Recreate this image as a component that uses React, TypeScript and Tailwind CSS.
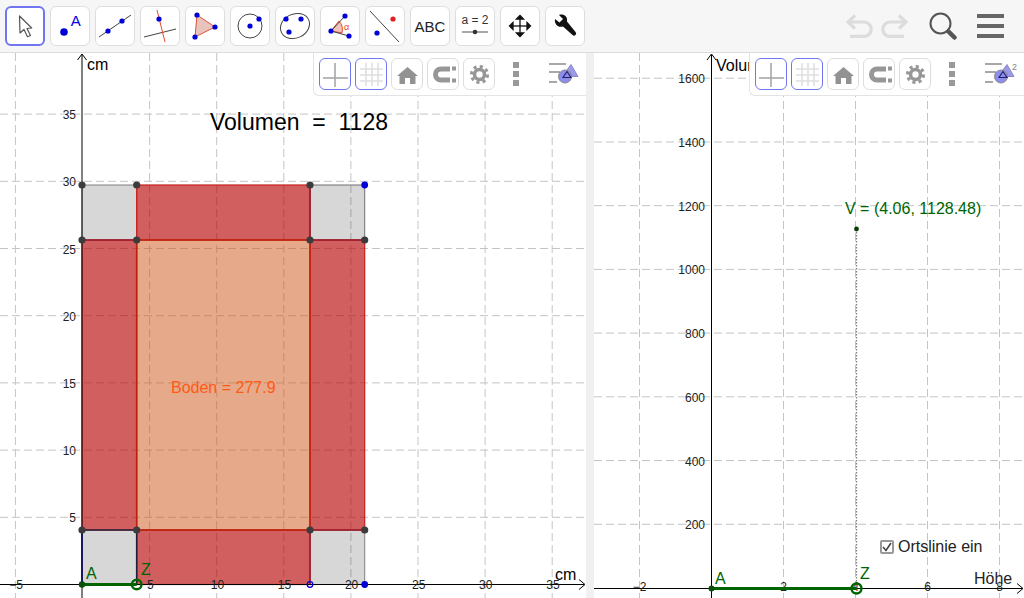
import type { ReactNode } from "react";

const BLUE = "#0000d8";
const DARK = "#3c3c3c";
const GREEN = "#006400";

function Dot({ x, y, r = 2.6, fill = BLUE }: { x: number; y: number; r?: number; fill?: string }) {
  return <circle cx={x} cy={y} r={r} fill={fill} />;
}

// toolbar icons, each drawn on a 40x40 box
const toolIcons: ReactNode[] = [
  <path key="move" d="M14.5 10 L15 27 L19 23.5 L22.5 30.7 L25.5 29.5 L22 22.5 L26.7 22 Z" fill="#fff" stroke="#555" strokeWidth="1.2" strokeLinejoin="round" />,
  <g key="point">
    <Dot x={14} y={26} r={3.8} />
    <text x={20.7} y={20} className="font-['Liberation_Sans'] text-[15px]" fill="#0000e0">A</text>
  </g>,
  <g key="line">
    <line x1={4} y1={31} x2={36} y2={9} stroke="#444" strokeWidth="1" />
    <Dot x={13} y={25} />
    <Dot x={27} y={15} />
  </g>,
  <g key="perp">
    <line x1={4} y1={31} x2={36} y2={23} stroke="#444" strokeWidth="1" />
    <line x1={17} y1={4} x2={25} y2={36} stroke="#e8492a" strokeWidth="1" />
    <Dot x={19} y={13} />
  </g>,
  <g key="polygon">
    <path d="M12 9 L30 21 L10 31 Z" fill="#e9c4bd" stroke="#d9533c" strokeWidth="1" />
    <Dot x={12} y={9} />
    <Dot x={30} y={21} />
    <Dot x={10} y={31} />
  </g>,
  <g key="circle">
    <circle cx={20} cy={20} r={12} fill="none" stroke="#444" strokeWidth="1" />
    <Dot x={20} y={20} />
    <Dot x={29} y={13} />
  </g>,
  <g key="ellipse">
    <ellipse cx={20} cy={20} rx={15} ry={12} transform="rotate(-25 20 20)" fill="none" stroke="#444" strokeWidth="1" />
    <Dot x={11} y={13} />
    <Dot x={26} y={13} />
    <Dot x={14} y={26} />
  </g>,
  <g key="angle">
    <path d="M11 25 L19 15 A13 13 0 0 1 22 27 Z" fill="#efc4ba" stroke="#e8492a" strokeWidth="1" />
    <path d="M11 25 L25 10 M11 25 L29 30" fill="none" stroke="#444" strokeWidth="1" />
    <text x={24} y={24} className="font-['Liberation_Sans'] text-[9px]" fill="#e8492a">α</text>
    <Dot x={11} y={25} />
    <Dot x={25} y={10} />
    <Dot x={29} y={30} />
  </g>,
  <g key="reflect">
    <line x1={5} y1={5} x2={34} y2={36} stroke="#444" strokeWidth="1" />
    <Dot x={28} y={13} fill="#e02020" />
    <Dot x={12} y={27} />
  </g>,
  <text key="abc" x={20} y={26} textAnchor="middle" className="font-['Liberation_Sans'] text-[15px]" fill="#222">ABC</text>,
  <g key="slider">
    <text x={20} y={17.5} textAnchor="middle" className="font-['Liberation_Sans'] text-[12px]" fill="#333">a = 2</text>
    <line x1={7} y1={26} x2={33} y2={26} stroke="#555" strokeWidth="1" />
    <circle cx={20} cy={26} r={2.3} fill="#333" />
  </g>,
  <g key="movegraphics" stroke="#111" strokeWidth="1.3" fill="#111">
    <line x1={20} y1={11} x2={20} y2={29} />
    <line x1={11} y1={20} x2={29} y2={20} />
    <path d="M16.5 13 L20 9.5 L23.5 13 Z" />
    <path d="M16.5 27 L20 30.5 L23.5 27 Z" />
    <path d="M13 16.5 L9.5 20 L13 23.5 Z" />
    <path d="M27 16.5 L30.5 20 L27 23.5 Z" />
  </g>,
  <path key="wrench" d="M10 13 L14.5 16.5 L18 13 L14 9 C18 7.5 23 10 22 15.5 L30.5 26 A2 2 0 0 1 27.5 29 L18 20.5 C13 22 9 18 10 13 Z" fill="#111" />,
];

function ToolButton({ icon, active }: { icon: ReactNode; active?: boolean }) {
  return (
    <div
      className={
        active
          ? "size-10 rounded-md border-2 border-[#6f76f0] bg-white"
          : "size-10 rounded-md border border-[#dedede] bg-white"
      }
    >
      <svg viewBox={active ? "2 2 36 36" : "1 1 38 38"} className={active ? "size-9" : "size-[38px]"}>
        {icon}
      </svg>
    </div>
  );
}

function Toolbar() {
  return (
    <div className="flex h-[53px] shrink-0 items-center justify-between border-b border-[#dcdcdc] bg-[#f6f6f6] pl-[5px] pr-[20px]">
      <div className="flex gap-[5px]">
        {toolIcons.map((icon, i) => (
          <ToolButton key={i} icon={icon} active={i === 0} />
        ))}
      </div>
      <div className="flex items-center gap-[20px]">
        <svg viewBox="0 0 64 24" className="h-[24px] w-[64px]" fill="none" stroke="#dcdcdc" strokeWidth="3.2">
          <path d="M3 8 H19 A7 7 0 0 1 19 22.4 H5" />
          <path d="M10 1.5 L3 8 L10 14.5" />
          <path d="M61 8 H45 A7 7 0 0 0 45 22.4 H59" />
          <path d="M54 1.5 L61 8 L54 14.5" />
        </svg>
        <svg viewBox="0 0 28 28" className="size-[28px]" fill="none">
          <circle cx={11.5} cy={11.5} r={10} stroke="#555" strokeWidth="2" />
          <line x1={19.5} y1={19.5} x2={25.5} y2={25.5} stroke="#555" strokeWidth="4.5" strokeLinecap="round" />
        </svg>
        <div className="flex w-[27px] flex-col gap-[6.5px]">
          <div className="h-[3.5px] bg-[#666]" />
          <div className="h-[3.5px] bg-[#666]" />
          <div className="h-[3.5px] bg-[#666]" />
        </div>
      </div>
    </div>
  );
}

const styleIcons: ReactNode[] = [
  <g key="axes" stroke="#a8a8a8" strokeWidth="1.6">
    <line x1={15} y1={4} x2={15} y2={28} />
    <line x1={3} y1={19} x2={28} y2={19} />
  </g>,
  <g key="grid" stroke="#e0e0e0" strokeWidth="1.6">
    <line x1={10} y1={4} x2={10} y2={27} />
    <line x1={16} y1={4} x2={16} y2={27} />
    <line x1={22} y1={4} x2={22} y2={27} />
    <line x1={4} y1={10} x2={27} y2={10} />
    <line x1={4} y1={16} x2={27} y2={16} />
    <line x1={4} y1={22} x2={27} y2={22} />
  </g>,
  <path key="home" d="M15.5 8 L26 17 H23.5 V25 H18 V19 H13 V25 H7.5 V17 H5 Z" fill="#929292" />,
  <g key="magnet" fill="none" stroke="#979797">
    <path d="M22 10 H13 A5.5 5.5 0 0 0 13 21 H22" strokeWidth="5" />
    <path d="M24 9.5 H28 M24 21.5 H28" strokeWidth="4" />
  </g>,
  <g key="gear" fill="none" stroke="#979797">
    <circle cx={15.5} cy={15.5} r={5} strokeWidth="3.6" />
    <circle cx={15.5} cy={15.5} r={8} strokeWidth="3.2" strokeDasharray="3.1 3.18" />
  </g>,
];

function StyleBar({ left, sup }: { left: string; sup?: boolean }) {
  return (
    <div className={left}>
      {styleIcons.map((icon, i) => (
        <div
          key={i}
          className={
            i < 2
              ? "size-[32px] rounded-md border border-[#6f76f0] bg-white"
              : "size-[32px] rounded-md border border-[#dedede] bg-white"
          }
        >
          <svg viewBox="0 0 30 30" className="size-[30px]">
            {icon}
          </svg>
        </div>
      ))}
      <div className="ml-[14px] mr-[25px] flex w-[6px] flex-col gap-[3px]">
        <div className="h-[6px] bg-[#999]" />
        <div className="h-[6px] bg-[#999]" />
        <div className="h-[6px] bg-[#999]" />
      </div>
      <svg viewBox="0 0 34 26" className="h-[26px] w-[34px] shrink-0">
        <g stroke="#999" strokeWidth="1.7">
          <line x1={1} y1={3} x2={18} y2={3} />
          <line x1={1} y1={11} x2={12} y2={11} />
          <line x1={1} y1={21} x2={9} y2={21} />
        </g>
        <path d="M23 3.5 L30 15.5 H14 Z" fill="#9a9ae6" stroke="#8a8ac8" strokeWidth="1" />
        <circle cx={17} cy={15.5} r={6.5} fill="#8d8df0" stroke="#888" strokeWidth="1" />
        <path d="M19 10.5 L23 16.5 H15 Z" fill="none" stroke="#222060" strokeWidth="1.1" />
        {sup && (
          <text x={28} y={9} className="font-['Liberation_Sans'] text-[9px]" fill="#888">2</text>
        )}
      </svg>
    </div>
  );
}

function Grid({ xs, ys, w, h }: { xs: number[]; ys: number[]; w: number; h: number }) {
  return (
    <g stroke="#c4c4c4" strokeWidth="1" strokeDasharray="8 4">
      {xs.map((x) => (
        <line key={x} x1={x} y1={0} x2={x} y2={h} />
      ))}
      {ys.map((y) => (
        <line key={y} x1={0} y1={y} x2={w} y2={y} />
      ))}
    </g>
  );
}

const leftXs = [-5, 5, 10, 15, 20, 25, 30, 35];
const leftYs = [5, 10, 15, 20, 25, 30, 35];
const lx = (v: number) => 82.5 + v * 13.42;
const ly = (v: number) => 531.5 - v * 13.44; // svg starts under the toolbar

const X0 = 82;
const X1 = 136.7;
const X2 = 310;
const X3 = 364.7;
const Y0 = 132; // top, 185 on the page
const Y1 = 187;
const Y2 = 477;
const Y3 = 531.5;

function LeftPlot() {
  const red = "rgba(182,0,0,0.627)";
  const grey = "rgba(0,0,0,0.155)";
  return (
    <svg width={586} height={545} className="block font-['Liberation_Sans']">
      <Grid xs={leftXs.map(lx)} ys={leftYs.map(ly)} w={586} h={545} />
      <rect x={X0} y={Y0} width={X1 - X0} height={Y1 - Y0} fill={grey} stroke="#808080" />
      <rect x={X2} y={Y0} width={X3 - X2} height={Y1 - Y0} fill={grey} stroke="#707070" />
      <rect x={X0} y={Y2} width={X1 - X0} height={Y3 - Y2} fill={grey} />
      <rect x={X2} y={Y2} width={X3 - X2} height={Y3 - Y2} fill={grey} stroke="#808080" />
      <rect x={X1} y={Y0} width={X2 - X1} height={Y1 - Y0} fill={red} stroke="#c8201a" strokeWidth="1.2" />
      <rect x={X0} y={Y1} width={X1 - X0} height={Y2 - Y1} fill={red} stroke="#c8201a" strokeWidth="1.2" />
      <rect x={X2} y={Y1} width={X3 - X2} height={Y2 - Y1} fill={red} stroke="#c8201a" strokeWidth="1.2" />
      <rect x={X1} y={Y2} width={X2 - X1} height={Y3 - Y2} fill={red} stroke="#c8201a" strokeWidth="1.2" />
      <rect x={X1} y={Y1} width={X2 - X1} height={Y2 - Y1} fill="rgba(205,83,21,0.5)" stroke="#c02010" strokeWidth="1.6" />
      <line x1={X0} y1={Y1} x2={X1} y2={Y1} stroke="#982035" strokeWidth="1.6" />
      <line x1={X2} y1={Y1} x2={X3} y2={Y1} stroke="#982035" strokeWidth="1.6" />
      <line x1={X2} y1={Y0} x2={X2} y2={Y1} stroke="#982035" strokeWidth="1.6" />
      <line x1={X2} y1={Y2} x2={X2} y2={Y3} stroke="#982035" strokeWidth="1.6" />
      <line x1={X2} y1={Y2} x2={X3} y2={Y2} stroke="#982035" strokeWidth="1.6" />
      <line x1={X0} y1={Y2} x2={X1} y2={Y2} stroke="#20203c" strokeWidth="1.6" />
      <line x1={X1} y1={Y2} x2={X1} y2={Y3} stroke="#20203c" strokeWidth="1.6" />
      <line x1={X0} y1={Y2} x2={X0} y2={Y3} stroke="#0000c0" strokeWidth="1.6" />

      <line x1={0} y1={Y3} x2={584} y2={Y3} stroke="#000" strokeWidth="1" />
      <line x1={X0} y1={2} x2={X0} y2={545} stroke="#000" strokeWidth="1" />
      <path d="M579 526.5 L585 531.5 L579 536.5" fill="none" stroke="#000" />
      <path d="M77.5 7 L82 1 L86.5 7" fill="none" stroke="#000" />
      {leftXs.map((v) => (
        <text key={v} x={lx(v) + 0.7} y={536} textAnchor="middle" className="text-[12px]" fill="#222">
          {v < 0 ? "\u2212" + -v : v}
        </text>
      ))}
      {leftYs.map((v) => (
        <text key={v} x={76} y={ly(v) + 5} textAnchor="end" className="text-[12px]" fill="#222">
          {v}
        </text>
      ))}
      <text x={87} y={17} className="text-[16px]" fill="#000">cm</text>
      <text x={555} y={527} className="text-[16px]" fill="#000">cm</text>
      <text x={210} y={77} className="text-[23px]" fill="#000" xmlSpace="preserve">Volumen  =  1128</text>
      <text x={171} y={340} className="text-[16px]" fill="#ff5a14">Boden = 277.9</text>

      {[X0, X1, X2].map((x) => (
        <Dot key={x} x={x} y={Y0} r={3.6} fill={DARK} />
      ))}
      <Dot x={X3} y={Y0} r={3.4} />
      {[X0, X1, X2, X3].map((x) => (
        <Dot key={x} x={x} y={Y1} r={3.6} fill={DARK} />
      ))}
      {[X0, X1, X2, X3].map((x) => (
        <Dot key={x} x={x} y={Y2} r={3.6} fill={DARK} />
      ))}
      <circle cx={X2} cy={Y3} r={2.8} fill="none" stroke="#0000d8" strokeWidth="1.3" />
      <Dot x={X3} y={Y3} r={3.4} />
      <line x1={X0} y1={Y3} x2={X1} y2={Y3} stroke={GREEN} strokeWidth="2.8" />
      <Dot x={X0} y={Y3} r={3.2} fill="#0a500a" />
      <circle cx={X1} cy={Y3} r={4.8} fill="none" stroke={GREEN} strokeWidth="2.4" />
      <text x={86} y={526} className="text-[16px]" fill={GREEN}>A</text>
      <text x={141} y={522} className="text-[16px]" fill={GREEN}>Z</text>
    </svg>
  );
}

const OX = 117.5; // y axis inside the right panel
const rightXs = [-2, 2, 4, 6, 8];
const rightYs = [200, 400, 600, 800, 1000, 1200, 1400, 1600];
const rx = (v: number) => OX + v * 36;
const ry = (v: number) => 535 - v * 0.3186;

function RightPlot() {
  return (
    <svg width={430} height={545} className="block font-['Liberation_Sans']">
      <Grid xs={rightXs.map(rx)} ys={rightYs.map(ry)} w={430} h={545} />
      <line x1={0} y1={535.5} x2={428} y2={535.5} stroke="#000" strokeWidth="1" />
      <line x1={OX} y1={2} x2={OX} y2={545} stroke="#000" strokeWidth="1" />
      <path d="M423 530.5 L429 535.5 L423 540.5" fill="none" stroke="#000" />
      <path d="M113 7 L117.5 1 L122 7" fill="none" stroke="#000" />
      {rightXs.map((v) => (
        <text key={v} x={rx(v)} y={538} textAnchor="middle" className="text-[12px]" fill="#222">
          {v < 0 ? "\u2212" + -v : v}
        </text>
      ))}
      {rightYs.map((v) => (
        <text key={v} x={111} y={ry(v) + 5} textAnchor="end" className="text-[12px]" fill="#222">
          {v}
        </text>
      ))}
      <text x={122} y={18} className="text-[16px]" fill="#000">Volumen</text>
      <text x={380} y={531} className="text-[16px]" fill="#222">Höhe</text>

      <line x1={262.5} y1={176} x2={262.5} y2={535} stroke="#808080" strokeWidth="1.3" strokeDasharray="1.5 1.5" />
      <Dot x={262.5} y={176} r={2.4} fill="#0a3c0a" />
      <text x={251} y={161} className="text-[16px]" fill={GREEN}>V = (4.06, 1128.48)</text>

      <line x1={OX} y1={535.5} x2={262.5} y2={535.5} stroke={GREEN} strokeWidth="3.2" />
      <Dot x={OX} y={535.5} r={3} fill="#0a500a" />
      <circle cx={262.5} cy={535.5} r={5} fill="none" stroke={GREEN} strokeWidth="2.4" />
      <text x={121} y={531} className="text-[16px]" fill={GREEN}>A</text>
      <text x={266} y={526} className="text-[16px]" fill={GREEN}>Z</text>
    </svg>
  );
}

export default function App() {
  return (
    <div className="flex h-[598px] w-[1024px] flex-col overflow-hidden bg-white font-['Liberation_Sans',sans-serif]">
      <Toolbar />
      <div className="flex min-h-0 flex-1">
        <div className="relative w-[586px] shrink-0 overflow-hidden">
          <LeftPlot />
          <StyleBar left="absolute right-0 top-0 flex h-[43px] w-[273px] items-center gap-[4px] rounded-bl-md border-b border-l border-[#e4e4e4] bg-white pl-[5px]" />
        </div>
        <div className="w-[8px] shrink-0 bg-[#f0f0f0]" />
        <div className="relative flex-1 overflow-hidden">
          <RightPlot />
          <StyleBar sup left="absolute right-0 top-0 flex h-[43px] w-[275px] items-center gap-[4px] rounded-bl-md border-b border-l border-[#e4e4e4] bg-white pl-[5px]" />
          <label className="absolute left-[286px] top-[486px] flex items-center gap-[4px] text-[16px] leading-[16px] text-[#222]">
            <span className="flex size-[14px] items-center justify-center rounded-[2px] border-2 border-[#999] bg-white">
              <svg viewBox="0 0 12 12" className="size-[12px] shrink-0">
                <path d="M2 6 L5 9.5 L10 2" fill="none" stroke="#444" strokeWidth="1.6" />
              </svg>
            </span>
            Ortslinie ein
          </label>
        </div>
      </div>
    </div>
  );
}
